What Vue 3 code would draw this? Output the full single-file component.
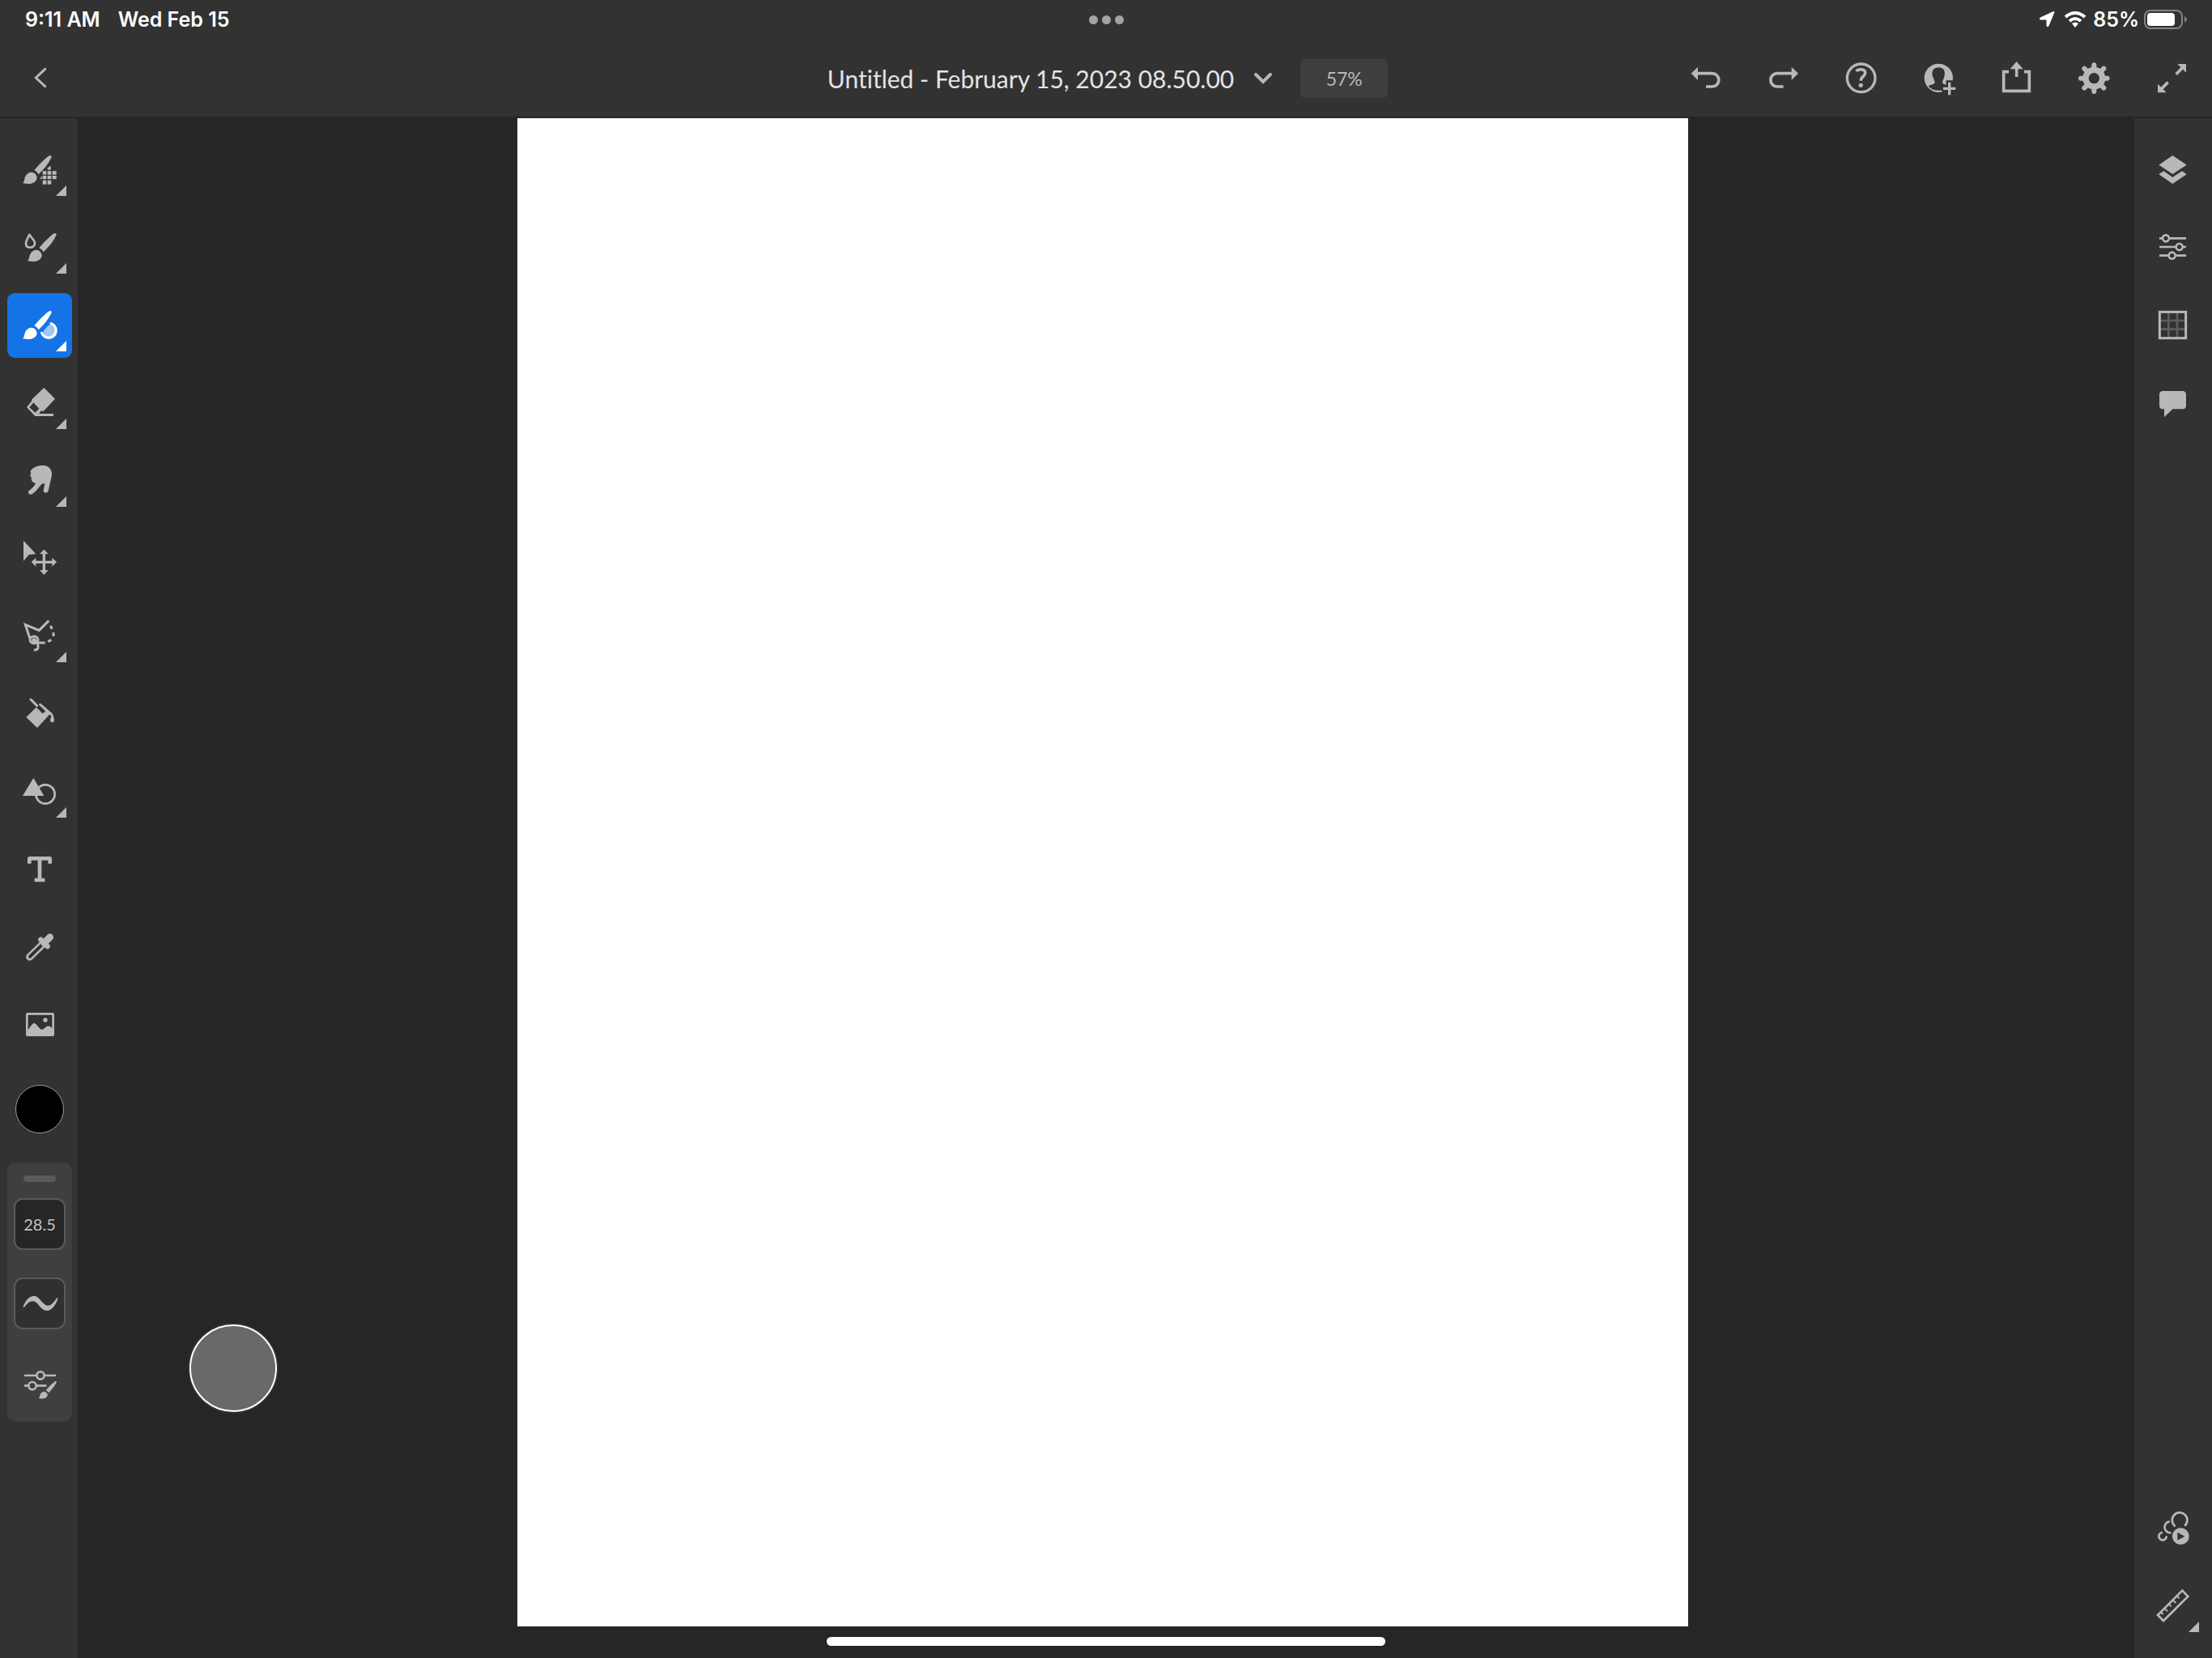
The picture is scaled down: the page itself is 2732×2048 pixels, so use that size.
<script setup>
import { ref } from 'vue'

const zoom = ref('57%')
const brushSize = ref('28.5')
const activeTool = ref('vector')

// Icons are drawn on a 240 grid
const brush = '<path d="M100 121C117 100 137 80 153 68C160 63 166 67 163 75C152 98 134 119 116 136C112 129 107 124 100 121Z"/><path d="M57 168C65 163 62 151 68 142C75 130 87 126 97 130C108 136 114 148 107 158C98 172 76 174 57 168Z"/>'
const dark = '#323232'

const tools = [
    { id: 'pixel', label: 'Pixel brush', more: true, svg: brush + '<path d="M149 112L161 104V119H149ZM131 124H145V137H131ZM149 124H163V137H149ZM167 124H182V137H167ZM122 150L128 142V154H122ZM131 141H145V154H131ZM149 141H163V154H149ZM167 141H182V154H167ZM131 158H145V173H131ZM149 158H163V173H149Z"/>' },
    { id: 'live', label: 'Live brush', more: true, svg: '<g transform="translate(18 0)">' + brush + '</g><path d="M82 69C80 82 69 91 69 104C69 114 76 119 86 119C96 119 102 112 102 103C102 91 85 82 82 69Z" fill="none" stroke="currentColor" stroke-width="8"/>' },
    { id: 'vector', label: 'Vector brush', more: true, svg: brush + '<path d="M134 144L136 138L153 119A22 22 0 1 1 134 144Z" opacity=".6"/><path d="M127 144A27 27 0 1 0 158 112" fill="none" stroke="currentColor" stroke-width="10"/>' },
    { id: 'eraser', label: 'Eraser', more: true, svg: '<path fill-rule="evenodd" d="M136 63L177 104L133 151L126 148L117 159H171V168H103L72 135L91 112L90 107ZM97 118L118 140L104 155L82 136Z"/>' },
    { id: 'smudge', label: 'Smudge', more: true, svg: '<path d="M88 80C100 66 120 62 134 63C155 64 167 80 165 99L152 157C149 167 133 166 134 155L139 129L128 131C118 142 108 158 92 169C82 174 72 162 82 155C92 148 100 140 105 129C92 126 87 115 90 108C84 103 84 96 88 92C85 88 86 83 88 80Z"/>' },
    { id: 'move', label: 'Move', svg: '<path d="M60 53L106 103L80 106L60 129ZM136 86L152 103H141V128H166V117L183 133L166 149V138H141V163H152L136 180L120 163H131V138H106V149L89 133L106 117V128H131V103H120Z"/>' },
    { id: 'lasso', label: 'Lasso', more: true, svg: '<g fill="none" stroke="currentColor" stroke-width="9"><path d="M84 128L67 77L118 98L154 62"/><path d="M160 81L166 93M171 106V120M163 133L151 140"/><ellipse cx="99" cy="133" rx="15" ry="13"/><path d="M140 144H116C102 144 92 142 96 132C103 124 114 150 114 156C115 167 110 172 99 170"/></g>' },
    { id: 'fill', label: 'Fill', svg: '<path d="M107 95L121 108L129 118L141 112L128 86L161 117L111 171L70 132Z"/><path d="M87 66L110 89M122 85L161 119" fill="none" stroke="currentColor" stroke-width="9" stroke-linecap="round"/><path d="M117 91L134 109" stroke="' + dark + '" stroke-width="6"/><path d="M150 112C166 108 172 124 174 143C174 153 159 153 159 143L163 127Z"/>' },
    { id: 'shape', label: 'Shapes', more: true, svg: '<circle cx="141" cy="129" r="35" fill="none" stroke="currentColor" stroke-width="8"/><path d="M97 69L136 135H57Z"/>' },
    { id: 'type', label: 'Type', svg: '<path d="M82 98V79H158V98M120 79V158M101 159H139" fill="none" stroke="currentColor" stroke-width="14" stroke-linejoin="round"/>' },
    { id: 'eyedropper', label: 'Eyedropper', svg: '<path d="M136 104L83 156" stroke="currentColor" stroke-width="27" stroke-linecap="round"/><path d="M130 110L84 155" stroke="' + dark + '" stroke-width="12" stroke-linecap="round"/><path d="M124 92L149 117" stroke="currentColor" stroke-width="19" stroke-linecap="round"/><path d="M137 104L158 83" stroke="currentColor" stroke-width="26" stroke-linecap="round"/>' },
    { id: 'image', label: 'Place image', svg: '<rect x="73" y="79" width="97" height="79" rx="2" fill="none" stroke="currentColor" stroke-width="8"/><circle cx="141" cy="102" r="8"/><path d="M76 139C84 129 92 114 100 113C109 114 119 137 128 137C137 136 143 125 152 124C159 124 164 130 168 136V160H76Z"/>' },
]

const actions = [
    { label: 'Undo', svg: '<path d="M65 104L90 80V129Z"/><path d="M86 104H143A24 24 0 0 1 143 153H120" fill="none" stroke="currentColor" stroke-width="11"/>' },
    { label: 'Redo', svg: '<path d="M174 104L149 80V129Z"/><path d="M153 104H96A24 24 0 0 0 96 153H119" fill="none" stroke="currentColor" stroke-width="11"/>' },
    { label: 'Help', svg: '<g fill="none" stroke="currentColor"><circle cx="119" cy="121" r="52" stroke-width="10"/><path d="M101 96C108 87 135 86 134 103C134 115 118 115 118 131" stroke-width="11"/></g><circle cx="118" cy="148" r="8"/>' },
    { label: 'Invite', svg: '<circle cx="118" cy="121" r="53"/><path d="M118 82C136 82 143 95 140 111C139 122 133 128 132 137C134 146 149 145 157 151C139 173 98 173 80 151C87 145 102 146 104 137C103 128 97 122 95 111C92 95 100 82 118 82Z" fill="' + dark + '"/><path d="M158 130V190M130 160H188" stroke="' + dark + '" stroke-width="25"/><path d="M158 137V184M135 160H181" stroke="currentColor" stroke-width="10"/>' },
    { label: 'Share', svg: '<path d="M90 98H71V169H166V98H147M119 84V117" fill="none" stroke="currentColor" stroke-width="11"/><path d="M119 60L143 88H95Z"/>' },
    { label: 'Settings', svg: '<g fill="none" stroke="currentColor"><circle cx="118" cy="122" r="31" stroke-width="22"/><path d="M118 73V86M118 158V171M69 122H82M154 122H167M82 86L93 97M143 147L154 158M154 86L143 97M93 147L82 158" stroke-width="18" stroke-linecap="round"/></g>' },
    { label: 'Full screen', svg: '<path d="M139 69H171V101ZM66 143V175H98Z"/><path d="M134 107L160 80M104 137L77 164" stroke="currentColor" stroke-width="11"/>' },
]

const panels = [
    { label: 'Layers', svg: '<path d="M121 66L173 101L121 135L70 101ZM70 136L88 124L121 147L156 124L173 136L121 171Z"/>' },
    { label: 'Layer properties', svg: '<g stroke="currentColor" stroke-width="8" fill="' + dark + '"><path d="M72 85H171M72 117H171M72 149H171"/><circle cx="96" cy="85" r="12"/><circle cx="146" cy="117" r="12"/><circle cx="119" cy="149" r="12"/></g>' },
    { label: 'Grid', svg: '<path d="M106 70V167M138 70V167M73 102H170M73 134H170" stroke="#5e5e5e" stroke-width="8"/><rect x="73" y="70" width="97" height="97" fill="none" stroke="currentColor" stroke-width="9"/>' },
    { label: 'Comments', svg: '<path d="M86 75H157Q171 75 171 89V128Q171 142 157 142H121L90 172V142H86Q72 142 72 128V89Q72 75 86 75Z"/>' },
]

const helpers = [
    { label: 'Timelapse', svg: '<g fill="none" stroke="currentColor" stroke-width="8"><path d="M131 112A28 28 0 1 1 166 110"/><path d="M110 94A21 21 0 1 0 115 136"/><path d="M84 135A14 14 0 1 0 98 148"/></g><circle cx="151" cy="149" r="31"/><path d="M139 134L166 149L139 164Z" fill="' + dark + '"/>' },
    { label: 'Ruler', more: true, svg: '<g fill="none" stroke="currentColor" stroke-width="8"><path d="M157 62L178 84L87 174L66 153Z"/><path d="M77 142L86 150M91 128L102 139M107 112L116 121M122 97L133 108M137 82L146 91" stroke-width="6"/></g>' },
]

const brushSettings = '<path d="M63 87H180M63 125H145" stroke="currentColor" stroke-width="8"/><g fill="#3f3f3f" stroke="currentColor" stroke-width="8"><circle cx="123" cy="87" r="14"/><circle cx="93" cy="125" r="14"/></g><g transform="translate(81 67) scale(.62)">' + brush + '</g>'
</script>

<template>
  <div class="app">
    <header class="header">
      <div class="status">
        <div class="status-left">
          <span>9:11 AM</span>
          <span>Wed Feb 15</span>
        </div>
        <div class="dots"><i></i><i></i><i></i></div>
        <div class="status-right">
          <svg class="location" viewBox="0 0 20 20"><path d="M19 1L12 18Q11 20 10 18V11Q10 10 9 10H2Q0 9 2 8L17 1Q20 0 19 1Z" stroke="currentColor" /></svg>
          <svg class="wifi" viewBox="0 0 28 20">
            <path d="M2 7Q14-3 26 7M7 12Q14 6 21 12" fill="none" stroke="currentColor" stroke-width="4" />
            <path d="M10 15Q14 12 18 15L14 20Z" />
          </svg>
          <span class="charge">85%</span>
          <svg class="battery" viewBox="0 0 53 24">
            <rect x="1" y="1" width="46" height="22" rx="7" fill="none" stroke="#848484" stroke-width="2" />
            <rect x="4" y="4" width="34" height="16" rx="4" />
            <path d="M50 8Q56 12 50 16Z" fill="#848484" />
          </svg>
        </div>
      </div>

      <div class="toolbar">
        <div class="toolbar-side">
          <button class="icon-btn" aria-label="Back">
            <svg viewBox="0 0 240 240"><path d="M140 88L106 120L140 152" fill="none" stroke="currentColor" stroke-width="9" stroke-linecap="round" /></svg>
          </button>
        </div>
        <div class="document">
          <h1 class="title">Untitled - February 15, 2023 08.50.00</h1>
          <button class="chevron" aria-label="Document menu">
            <svg viewBox="0 0 24 16"><path d="M3 3L12 12L21 3" fill="none" stroke="currentColor" stroke-width="4" stroke-linecap="round" /></svg>
          </button>
          <button class="zoom">{{ zoom }}</button>
        </div>
        <div class="toolbar-side actions">
          <button v-for="a in actions" :key="a.label" class="icon-btn" :aria-label="a.label">
            <svg viewBox="0 0 240 240" v-html="a.svg"></svg>
          </button>
        </div>
      </div>
    </header>

    <div class="body">
      <nav class="rail">
        <div class="group">
          <button
            v-for="t in tools"
            :key="t.id"
            class="icon-btn"
            :class="{ active: t.id === activeTool, more: t.more }"
            :aria-label="t.label"
            @click="activeTool = t.id"
          >
            <svg viewBox="0 0 240 240" v-html="t.svg"></svg>
          </button>
        </div>
        <button class="swatch" aria-label="Color"></button>
        <div class="options">
          <div class="handle"></div>
          <input v-model="brushSize" class="option size" type="text" aria-label="Brush size">
          <button class="option" aria-label="Smoothing">
            <svg viewBox="0 0 180 180"><path d="M29 102C37 79 52 62 70 62C89 63 101 97 121 98C136 98 145 81 154 70Q158 66 157 74C149 95 135 118 115 117C92 116 84 82 65 82C51 82 43 92 34 103Q28 107 29 102Z" /></svg>
          </button>
          <button class="icon-btn brush-settings" aria-label="Brush settings">
            <svg viewBox="0 0 240 240" v-html="brushSettings"></svg>
          </button>
        </div>
      </nav>

      <main class="workspace">
        <div class="artboard"></div>
        <button class="touch" aria-label="Touch shortcut"></button>
      </main>

      <aside class="rail right">
        <div class="group">
          <button v-for="p in panels" :key="p.label" class="icon-btn" :aria-label="p.label">
            <svg viewBox="0 0 240 240" v-html="p.svg"></svg>
          </button>
        </div>
        <div class="group">
          <button v-for="h in helpers" :key="h.label" class="icon-btn" :class="{ more: h.more }" :aria-label="h.label">
            <svg viewBox="0 0 240 240" v-html="h.svg"></svg>
          </button>
        </div>
      </aside>
    </div>
    <div class="home-bar"></div>
  </div>
</template>

<style>
body { margin: 0; background: #262626; }
</style>

<style scoped>
.app { display: flex; flex-direction: column; min-height: 100vh; color: #b8b8b8; font-family: Lato, "Liberation Sans", sans-serif; }
.app * { box-sizing: border-box; }
button { padding: 0; border: 0; background: none; color: inherit; font-family: inherit; }
svg { display: block; fill: currentColor; }

.header { background: #323232; border-bottom: 2px solid #262626; }
.status { display: grid; grid-template-columns: 1fr auto 1fr; align-items: center; height: 48px; padding: 0 31px; color: #fff; font-family: Inter, sans-serif; font-size: 25px; font-weight: 600; }
.status-left { display: flex; gap: 22px; }
.status-right { display: flex; justify-content: flex-end; align-items: center; }
.dots { display: flex; gap: 5px; }
.dots i { width: 11px; height: 11px; border-radius: 50%; background: #a3a3a3; }
.location { width: 20px; height: 20px; margin-right: 11px; }
.wifi { width: 28px; height: 20px; margin-right: 8px; }
.charge { margin-right: 6px; }
.battery { width: 53px; height: 24px; }

.toolbar { display: grid; grid-template-columns: 1fr auto 1fr; align-items: center; height: 96px; padding: 0 9px; }
.toolbar-side { display: flex; gap: 16px; }
.actions { justify-content: flex-end; }
.document { display: flex; align-items: center; padding: 2px 0 0 4px; }
.title { margin: 0; color: #e4e4e4; font-size: 30px; font-weight: 400; line-height: 40px; font-variant-ligatures: none; white-space: nowrap; }
.chevron { margin: 0 34px 0 24px; }
.chevron svg { width: 24px; height: 16px; }
.zoom { width: 108px; height: 48px; border-radius: 6px; background: #3e3e3e; font-size: 23px; }

.icon-btn { position: relative; flex: none; width: 80px; height: 80px; border-radius: 9px; }
.icon-btn svg { width: 80px; height: 80px; }
.icon-btn.active { background: #1473e6; color: #fff; }
.more::after { content: ''; position: absolute; right: 7px; bottom: 8px; width: 13px; height: 13px; background: currentColor; clip-path: polygon(100% 0, 100% 100%, 0 100%); }

.body { flex: 1; display: flex; }
.rail { flex: none; display: flex; flex-direction: column; align-items: center; width: 96px; padding: 24px 0 24px 2px; background: #323232; }
.rail.right { justify-content: space-between; padding: 24px 2px 24px 0; }
.group { display: flex; flex-direction: column; gap: 16px; }
.swatch { flex: none; width: 60px; height: 60px; margin: 34px 0 36px; border: 1px solid #9a9a9a; border-radius: 50%; background: #000; }
.options { display: flex; flex-direction: column; align-items: center; width: 80px; padding: 16px 0 6px; border-radius: 10px; background: #3f3f3f; }
.handle { width: 40px; height: 8px; margin-bottom: 20px; border-radius: 4px; background: #5a5a5a; }
.option { width: 64px; height: 64px; margin-bottom: 34px; padding: 0; border: 2px solid #5a5a5a; border-radius: 11px; background: #303030; }
.size { background: #262626; color: #c4c4c4; font: 20px Lato, sans-serif; text-align: center; }
.option svg { width: 60px; height: 60px; }
.brush-settings { margin-top: -6px; }

.workspace { position: relative; flex: 1; display: flex; justify-content: center; padding: 0 8px 39px 0; background: #262626; }
.artboard { aspect-ratio: 1446 / 1863; background: #fff; }
.touch { position: absolute; left: 138px; bottom: 304px; width: 108px; height: 108px; border: 2px solid #fff; border-radius: 50%; background: #696969; box-shadow: 0 0 2px 1px #444; }
.home-bar { position: fixed; bottom: 15px; left: 50%; width: 690px; height: 11px; margin-left: -345px; border-radius: 6px; background: #fff; }
</style>
